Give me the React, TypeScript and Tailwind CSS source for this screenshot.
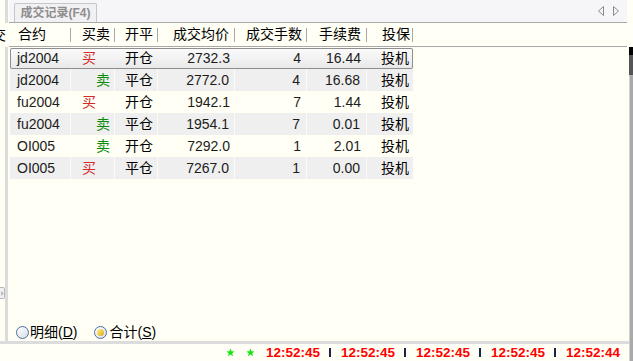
import clsx from "clsx";

type Trade = {
  code: string;
  side: "买" | "卖";
  oc: string;
  price: string;
  qty: string;
  fee: string;
};

const trades: Trade[] = [
  { code: "jd2004", side: "买", oc: "开仓", price: "2732.3", qty: "4", fee: "16.44" },
  { code: "jd2004", side: "卖", oc: "平仓", price: "2772.0", qty: "4", fee: "16.68" },
  { code: "fu2004", side: "买", oc: "开仓", price: "1942.1", qty: "7", fee: "1.44" },
  { code: "fu2004", side: "卖", oc: "平仓", price: "1954.1", qty: "7", fee: "0.01" },
  { code: "OI005", side: "卖", oc: "开仓", price: "7292.0", qty: "1", fee: "2.01" },
  { code: "OI005", side: "买", oc: "平仓", price: "7267.0", qty: "1", fee: "0.00" },
];

const times = ["12:52:45", "12:52:45", "12:52:45", "12:52:45", "12:52:44"];

function HeadCell({ w, pl, label }: { w: string; pl: string; label: string }) {
  return (
    <div className={clsx("h-full flex items-center justify-between shrink-0", w)}>
      <span className={pl}>{label}</span>
      <div className="w-px h-[14px] bg-[#a8a8a8]" />
    </div>
  );
}

function Star() {
  return (
    <svg width="9" height="9" viewBox="0 0 10 10" className="shrink-0">
      <path d="M5 0.5 6.2 3.7 9.6 3.8 6.9 5.9 7.9 9.3 5 7.3 2.1 9.3 3.1 5.9 0.4 3.8 3.8 3.7Z" fill="#14e614" />
    </svg>
  );
}

function Radio({ checked }: { checked?: boolean }) {
  return (
    <div className="w-[13px] h-[13px] rounded-full border border-[#4a6e9c] bg-linear-to-br from-white to-[#d9dde6] flex items-center justify-center shrink-0">
      {checked && <div className="w-[7px] h-[7px] rounded-full bg-linear-to-br from-[#fff27a] to-[#e0a800]" />}
    </div>
  );
}

function TradeRow({ t, i }: { t: Trade; i: number }) {
  const gray = i % 2 === 1;
  const sel = i === 0;
  const cell = clsx("h-full flex items-center shrink-0", gray && "bg-[#efefef] border-r border-[#fcfcf6]");
  return (
    <div
      className={clsx(
        "flex w-[403px] text-[14px] text-[#1c1c1c]",
        sel
          ? "h-[21px] mt-px rounded-[2px] shadow-[inset_0_0_0_1px_#8e8e8e] bg-linear-to-b from-[#fcfcfc] to-[#e8e8e8]"
          : "h-[22px]"
      )}
    >
      <div className={clsx(cell, "w-[61px] pl-[7px]")}>{t.code}</div>
      <div className={clsx(cell, "w-[44px]", t.side === "买" ? "pl-[11px] text-[#d42a2a]" : "pl-[25px] text-[#0a8a0a]")}>
        {t.side}
      </div>
      <div className={clsx(cell, "w-[43px] pl-[10px] text-black")}>{t.oc}</div>
      <div className={clsx(cell, "w-[77px] justify-end pr-[5px]")}>{t.price}</div>
      <div className={clsx(cell, "w-[72px] justify-end pr-[6px]")}>{t.qty}</div>
      <div className={clsx(cell, "w-[60px] justify-end pr-[6px]")}>{t.fee}</div>
      <div className={clsx("h-full flex items-center shrink-0 w-[46px] pl-[14px] text-black", gray && "bg-[#efefef]")}>
        投机
      </div>
    </div>
  );
}

export default function App() {
  return (
    <div className="w-[633px] h-[361px] flex bg-[#fffff5] overflow-hidden font-['Liberation_Sans','Noto_Sans_CJK_SC',sans-serif]">
      <div className="w-[629px] flex flex-col">
        <div className="h-[341px] flex">
          {/* left gutter */}
          <div className="w-[9px] flex flex-col shrink-0">
            <div className="h-[23px] flex">
              <div className="w-[5px]" />
              <div className="w-[3px] bg-[#dcdcdc]" />
            </div>
            <div className="h-[24px] w-[6px] flex justify-end items-center overflow-hidden">
              <span className="shrink-0 text-[14px] text-black">交</span>
            </div>
            <div className="flex-1 flex">
              <div className="w-[5px] flex flex-col">
                <div className="flex-1" />
                <div className="h-[12px] w-[5px] rounded-r-[2px] border border-l-0 border-[#b8b8b8] bg-[#f0f0f0] flex items-center justify-center">
                  <svg width="3" height="5" viewBox="0 0 3 5">
                    <path d="M0 0 3 2.5 0 5Z" fill="#bdbdbd" />
                  </svg>
                </div>
                <div className="h-[42px]" />
              </div>
              <div className="w-[3px] bg-[#dcdcdc]" />
            </div>
          </div>

          {/* main panel */}
          <div className="w-[618px] flex flex-col">
            {/* tab strip */}
            <div className="h-[23px] bg-[#f6f6f8] border-b border-[#a9a9a9] flex items-end pl-[5px]">
              <div className="h-[19px] w-[83px] border border-b-0 border-[#c6c6c6] rounded-t-[2px] bg-[#f1f1f3] flex items-center justify-center text-[12px] font-bold text-[#8e8e8e]">
                成交记录(F4)
              </div>
              <div className="flex-1" />
              <div className="self-stretch flex items-center gap-[9px] pr-[8px]">
                <svg width="6" height="10" viewBox="0 0 6 10">
                  <path d="M5.5 0.5 0.5 5 5.5 9.5Z" fill="none" stroke="#8a8a8a" />
                </svg>
                <svg width="6" height="10" viewBox="0 0 6 10">
                  <path d="M0.5 0.5 5.5 5 0.5 9.5Z" fill="none" stroke="#8a8a8a" />
                </svg>
              </div>
            </div>

            {/* header */}
            <div className="h-[24px] border-b border-[#a9a9a9] flex pl-px text-[14px] text-black">
              <HeadCell w="w-[61px]" pl="pl-[8px]" label="合约" />
              <HeadCell w="w-[44px]" pl="pl-[11px]" label="买卖" />
              <HeadCell w="w-[43px]" pl="pl-[10px]" label="开平" />
              <HeadCell w="w-[77px]" pl="pl-[15px]" label="成交均价" />
              <HeadCell w="w-[72px]" pl="pl-[11px]" label="成交手数" />
              <HeadCell w="w-[60px]" pl="pl-[12px]" label="手续费" />
              <HeadCell w="w-[46px]" pl="pl-[15px]" label="投保" />
            </div>

            {/* rows */}
            <div className="flex flex-col pl-px">
              {trades.map((t, i) => (
                <TradeRow key={i} t={t} i={i} />
              ))}
            </div>

            <div className="flex-1" />

            {/* radios */}
            <div className="h-[16px] mb-[1px] flex items-center pl-[7px] text-[14px] text-black">
              <Radio />
              <span className="ml-[1px]">
                明细(<span className="underline">D</span>)
              </span>
              <div className="ml-[17px]">
                <Radio checked />
              </div>
              <span className="ml-[2px]">
                合计(<span className="underline">S</span>)
              </span>
            </div>
          </div>
          <div className="flex-1" />
        </div>

        {/* separator */}
        <div className="h-[3px] bg-[#dcdcdc]" />

        {/* status bar */}
        <div className="flex-1 flex items-center pl-[226px]">
          <Star />
          <div className="w-[12px]" />
          <Star />
          <div className="w-[11px]" />
          {times.map((tm, i) => (
            <div key={i} className="flex items-center">
              <span className="w-[63px] text-[13.5px] font-bold text-[#ff0000] leading-none">{tm}</span>
              {i < times.length - 1 && (
                <>
                  <div className="w-[2px] h-[9px] bg-[#1b2548]" />
                  <div className="w-[10px]" />
                </>
              )}
            </div>
          ))}
        </div>
      </div>

      {/* right edge strip */}
      <div className="w-[4px] flex flex-col">
        <div className="h-[47px] bg-[#fffff5]" />
        <div className="h-[8px] bg-black" />
        <div className="h-[20px] bg-[#555555]" />
        <div className="flex-1 bg-[#a9a9a9] border-l border-[#d0d0d0]" />
      </div>
    </div>
  );
}
